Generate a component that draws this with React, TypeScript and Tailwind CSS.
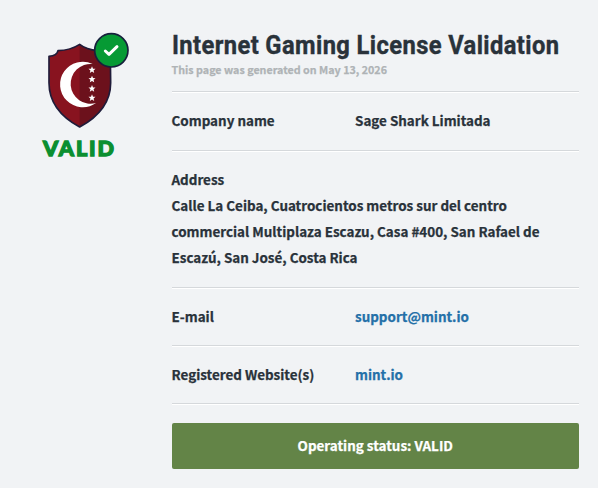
import type { ReactNode } from 'react';
import clsx from 'clsx';

const STAR = 'M0,-11 L3,-3.8 10.5,-3.4 4.7,1.4 6.6,8.9 0,4.8 -6.6,8.9 -4.7,1.4 -10.5,-3.4 -3,-3.8 Z';
const SHIELD =
    'M149 73 C163 84 183 90 203 92 L214 93 C216 102 231 109 241 109 L242 188 C242 245 206 290 149 321 C92 290 57 245 57 188 L57 109 C70 108 82 103 84 92 C109 91 132 84 149 73 Z';

// Seal: shield with crescent, check badge and status word
function ValidSeal() {
    return (
        <svg width="110" height="150" viewBox="0 0 330 450" role="img" aria-label="Valid">
            <path d={SHIELD} fill="#88131f" />
            <path
                d="M149 73 C163 84 183 90 203 92 L214 93 C216 102 231 109 241 109 L242 188 C242 245 206 290 149 321 Z"
                fill="#6c111c"
            />
            <path d={SHIELD} fill="none" stroke="#1f1c3a" strokeWidth="5" strokeLinejoin="round" />
            <path d="M188 132 A68.2 68.2 0 1 0 198 249 A59.8 59.8 0 1 1 188 132 Z" fill="#fff" />
            {[150, 178, 206, 234].map((y) => (
                <path key={y} d={STAR} transform={`translate(186 ${y})`} fill="#fff" />
            ))}
            <circle cx="244" cy="91" r="50" fill="#069a34" stroke="#17203c" strokeWidth="5" />
            <path
                d="M226 93 L237 103 L261 80"
                fill="none"
                stroke="#fff"
                strokeWidth="9"
                strokeLinecap="round"
                strokeLinejoin="round"
            />
            <text
                x="39"
                y="409"
                textLength="213"
                lengthAdjust="spacing"
                className="fill-[#0b8f30] stroke-[#0b8f30] font-['Lato',sans-serif] text-[65px] font-black"
                strokeWidth="4"
            >
                VALID
            </text>
        </svg>
    );
}

interface RowProps {
    label: string;
    className?: string;
    children: ReactNode;
}

function Row({ label, className, children }: RowProps) {
    return (
        <div className={clsx('flex border-b border-[#d5d8db] pt-4 shadow-[0_1px_0_#fff]', className ?? 'pb-4')}>
            <dt className="w-[183.5px] shrink-0">{label}</dt>
            <dd>{children}</dd>
        </div>
    );
}

export default function App() {
    return (
        <main className="flex h-[488px] w-[598px] bg-[#f1f3f5] pt-5 pl-[30px] font-['Noto_Sans_CJK_SC',sans-serif] text-[13.43px] leading-[25px] font-bold text-[#29323a] [-webkit-text-stroke:0.25px]">
            <div className="w-[141.5px] shrink-0">
                <ValidSeal />
            </div>

            <section className="w-[407.5px]">
                <header className="h-[72px] border-b border-[#d5d8db] pt-2 shadow-[0_1px_0_#fff]">
                    <h1 className="h-[34px] origin-left scale-x-[0.912] font-['Roboto',sans-serif] text-[26px] leading-[35px] font-bold tracking-[0.44px] whitespace-nowrap [-webkit-text-stroke:0.4px]">
                        Internet Gaming License Validation
                    </h1>
                    <p className="text-[10.72px] leading-4 text-[#afb3b6]">This page was generated on May 13, 2026</p>
                </header>

                <dl>
                    <Row label="Company name" className="pb-[17px]">
                        Sage Shark Limitada
                    </Row>

                    {/* The address takes the full width */}
                    <div className="border-b border-[#d5d8db] pt-[15px] pb-[17px] leading-[26px] shadow-[0_1px_0_#fff]">
                        <dt>Address</dt>
                        <dd className="whitespace-nowrap">
                            Calle La Ceiba, Cuatrocientos metros sur del centro
                            <br />
                            commercial Multiplaza Escazu, Casa #400, San Rafael de
                            <br />
                            Escazú, San José, Costa Rica
                        </dd>
                    </div>

                    <Row label="E-mail">
                        <a href="mailto:support@mint.io" className="text-[#2470a8]">
                            support@mint.io
                        </a>
                    </Row>
                    <Row label="Registered Website(s)">
                        <a href="#" className="text-[#2470a8]">
                            mint.io
                        </a>
                    </Row>
                </dl>

                <div className="mt-[19px] flex h-[46px] items-center justify-center rounded-xs bg-[#638447] pb-0.5 text-white">
                    Operating status: VALID
                </div>
            </section>
        </main>
    );
}
